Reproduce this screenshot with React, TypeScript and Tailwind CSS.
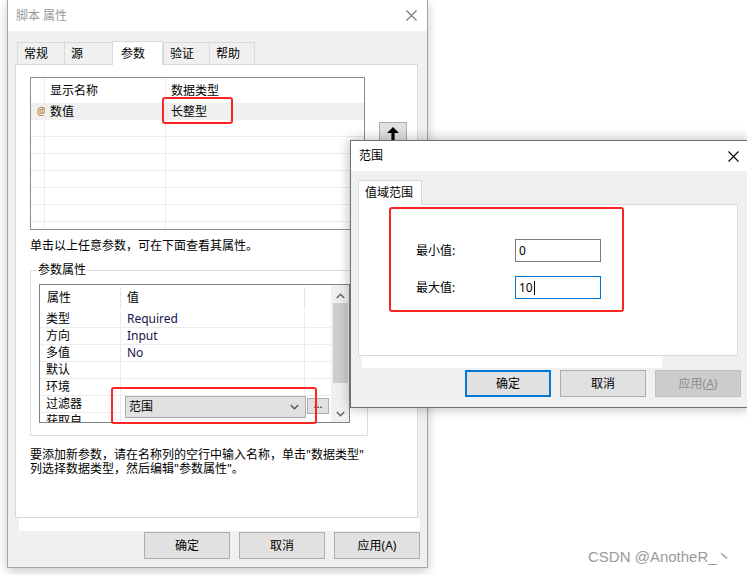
import React from 'react';

function CloseX({ className }: { className?: string }) {
  return (
    <svg width="11" height="11" viewBox="0 0 11 11" className={className}>
      <path d="M0.5 0.5L10.5 10.5M10.5 0.5L0.5 10.5" stroke="currentColor" strokeWidth="1.1" fill="none" />
    </svg>
  );
}

function Chevron({ up, className }: { up?: boolean; className?: string }) {
  return (
    <svg width="9" height="6" viewBox="0 0 9 6" className={className}>
      <path d={up ? 'M0.8 5L4.5 1.2L8.2 5' : 'M0.8 1L4.5 4.8L8.2 1'} stroke="currentColor" strokeWidth="1.4" fill="none" />
    </svg>
  );
}

function WinButton({ children, className = '' }: { children: React.ReactNode; className?: string }) {
  return (
    <div className={`h-[27px] w-[86px] flex items-center justify-center border text-[12px] ${className}`}>
      {children}
    </div>
  );
}

const propRows = [
  { name: '类型', value: 'Required' },
  { name: '方向', value: 'Input' },
  { name: '多值', value: 'No' },
  { name: '默认', value: '' },
  { name: '环境', value: '' },
  { name: '过滤器', value: '' },
  { name: '获取自', value: '' },
];

function ParamTable() {
  return (
    <div className="w-[335px] h-[153px] border border-[#8c8c8c] bg-white overflow-hidden">
      <div className="flex h-[25px]">
        <div className="w-[14px] border-r border-[#ececec]" />
        <div className="w-[121px] border-r border-[#ececec] pl-[5px] flex items-center">显示名称</div>
        <div className="flex-1 pl-[5px] flex items-center">数据类型</div>
      </div>
      <div className="flex h-[17px] bg-[#efefef] leading-[17px]">
        <div className="w-[14px] overflow-hidden relative">
          <span className="absolute left-[6px] top-0 text-[10px] text-[#b06010]">@</span>
        </div>
        <div className="w-[121px] pl-[5px]">数值</div>
        <div className="flex-1 pl-[5px]">长整型</div>
      </div>
      {[0, 1, 2, 3, 4, 5, 6].map((i) => (
        <div key={i} className="flex h-[17px] border-b border-[#ececec]">
          <div className="w-[14px] border-r border-[#ececec]" />
          <div className="w-[121px] border-r border-[#ececec]" />
          <div className="flex-1" />
        </div>
      ))}
    </div>
  );
}

function PropGrid() {
  return (
    <div className="w-[311px] h-[139px] border border-[#828282] flex bg-white">
      <div className="flex-1 overflow-hidden">
        <div className="flex h-[26px] items-center">
          <div className="w-[81px] h-[22px] pl-[7px] flex items-center border-r border-[#e5e5e5]">属性</div>
          <div className="w-[184px] h-[22px] pl-[6px] flex items-center border-r border-[#e5e5e5]">值</div>
          <div className="w-[26px]" />
        </div>
        {propRows.map((r) => (
          <div key={r.name} className="relative flex h-[17px] leading-[16px] border-b border-[#ececec]">
            <div className="w-[81px] pl-[6px] border-r border-[#ececec]">{r.name}</div>
            <div className="w-[184px] pl-[6px] border-r border-[#ececec] text-[#14144a]">{r.value}</div>
            <div className="w-[26px]" />
            {r.name === '过滤器' && (
              <>
                <div className="absolute left-[85px] top-0 z-10 w-[181px] h-[22px] bg-[#e1e1e1] border border-[#adadad] flex items-center justify-between pl-[3px] pr-[6px]">
                  <span>范围</span>
                  <Chevron className="text-[#555]" />
                </div>
                <div className="absolute left-[267px] top-[2px] z-10 w-[22px] h-[16px] bg-[#e1e1e1] border border-[#adadad] flex items-center justify-center text-[11px] leading-[10px] pb-[4px]">
                  ...
                </div>
              </>
            )}
          </div>
        ))}
      </div>
      <div className="w-[18px] bg-[#f0f0f0] flex flex-col items-center text-[#606060]">
        <Chevron up className="mt-[8px]" />
        <div className="mt-[4px] w-[15px] h-[80px] bg-[#cdcdcd]" />
        <div className="flex-1" />
        <Chevron className="mb-[5px]" />
      </div>
    </div>
  );
}

function MainDialog() {
  const tabs = ['常规', '源', '参数', '验证', '帮助'];
  const widths = ['w-[47px]', 'w-[48px]', 'w-[51px]', 'w-[46px]', 'w-[46px]'];
  return (
    <div className="absolute left-[7px] top-0 w-[421px] h-[568px] border-x border-b border-[#a6a6a6] bg-[#f0f0f0] shadow-[0_3px_10px_rgba(0,0,0,0.22)] flex flex-col">
      <div className="h-[31px] bg-white flex items-center justify-between pl-[8px] pr-[10px]">
        <span className="text-[12px] text-[#9a9a9a]">脚本 属性</span>
        <CloseX className="text-[#777]" />
      </div>
      <div className="pl-[7px] pt-[9px]">
        <div className="ml-[2px] h-[24px] flex items-end">
          {tabs.map((t, i) =>
            t === '参数' ? (
              <div key={t} className={`${widths[i]} h-[24px] bg-white border-x border-t border-[#d9d9d9] -mb-[1px] relative z-10 pl-[8px] pt-[3px]`}>
                {t}
              </div>
            ) : (
              <div key={t} className={`${widths[i]} h-[22px] border-t border-l border-[#d9d9d9] last:border-r pl-[6px] flex items-center`}>
                {t}
              </div>
            )
          )}
        </div>
        <div className="w-[403px] h-[454px] bg-white border border-[#d9d9d9] pl-[14px] pt-[12px]">
          <div className="flex items-start">
            <ParamTable />
            <div className="ml-[14px] mt-[45px] w-[28px] h-[26px] bg-[#e1e1e1] border border-[#adadad] flex justify-center pt-[4px]">
              <svg width="12" height="20" viewBox="0 0 12 20">
                <polygon points="6,0 12,6 7.6,6 7.6,20 4.4,20 4.4,6 0,6" fill="#000" />
              </svg>
            </div>
          </div>
          <div className="mt-[8px] leading-[16px]">单击以上任意参数，可在下面查看其属性。</div>
          <div className="relative mt-[16px] w-[338px] h-[166px] border border-[#dcdcdc] pl-[8px] pt-[13px]">
            <span className="absolute left-[6px] -top-[9px] bg-white px-[1px] leading-[16px]">参数属性</span>
            <PropGrid />
          </div>
          <div className="mt-[12px] leading-[14px]">
            <div>要添加新参数，请在名称列的空行中输入名称，单击"数据类型"</div>
            <div>列选择数据类型，然后编辑"参数属性"。</div>
          </div>
        </div>
        <div className="ml-[4px] w-[401px] h-[13px] bg-white" />
        <div className="mt-[1px] flex justify-end gap-[9px] pr-[7px]">
          <WinButton className="bg-[#e1e1e1] border-[#adadad]">确定</WinButton>
          <WinButton className="bg-[#e1e1e1] border-[#adadad]">取消</WinButton>
          <WinButton className="bg-[#e1e1e1] border-[#adadad]">应用(A)</WinButton>
        </div>
      </div>
    </div>
  );
}

function RangeDialog() {
  return (
    <div className="absolute left-[350px] top-[140px] w-[400px] h-[268px] border border-[#707070] bg-[#f0f0f0] shadow-[0_0_12px_rgba(0,0,0,0.3)] flex flex-col">
      <div className="h-[30px] bg-white flex items-center justify-between pl-[8px] pr-[10px]">
        <span className="text-[12px] text-black">范围</span>
        <CloseX className="text-black" />
      </div>
      <div className="pl-[7px] pt-[9px]">
        <div className="w-[64px] h-[25px] bg-white border-x border-t border-[#d9d9d9] -mb-[1px] relative z-10 pl-[6px] pt-[3px]">
          值域范围
        </div>
        <div className="w-[380px] h-[152px] bg-white border border-[#d9d9d9] pl-[57px] pt-[34px]">
          <div className="flex items-center">
            <div className="w-[99px]">最小值:</div>
            <div className="w-[86px] h-[23px] border border-[#7a7a7a] bg-white pl-[3px] flex items-center">0</div>
          </div>
          <div className="flex items-center mt-[14px]">
            <div className="w-[99px]">最大值:</div>
            <div className="w-[86px] h-[23px] border border-[#0078d7] bg-white pl-[3px] flex items-center">
              10
              <span className="ml-[1px] w-[1px] h-[14px] bg-black" />
            </div>
          </div>
        </div>
        <div className="ml-[4px] w-[300px] h-[12px] bg-white" />
        <div className="mt-[2px] ml-[107px] flex gap-[9px]">
          <WinButton className="bg-[#e1e1e1] border-2 border-[#0078d7]">确定</WinButton>
          <WinButton className="bg-[#e1e1e1] border-[#adadad]">取消</WinButton>
          <WinButton className="bg-[#cccccc] border-[#bfbfbf] text-[#8d8d8d]">
            应用(<span className="underline">A</span>)
          </WinButton>
        </div>
      </div>
    </div>
  );
}

export default function App() {
  return (
    <div className="relative w-[747px] h-[575px] bg-white overflow-hidden text-[12px] text-black font-['Noto_Sans','Noto_Sans_CJK_SC',sans-serif]">
      <MainDialog />
      <RangeDialog />
      {/* annotation boxes */}
      <div className="absolute left-[162px] top-[97px] w-[71px] h-[27px] border-2 border-[#ff2424] rounded-[3px] z-20" />
      <div className="absolute left-[111px] top-[387px] w-[206px] h-[37px] border-2 border-[#ff2424] rounded-[3px] z-20" />
      <div className="absolute left-[389px] top-[207px] w-[235px] h-[105px] border-2 border-[#ff2424] rounded-[3px] z-20" />
      <div className="absolute left-[588px] top-[547px] text-[15px] leading-[20px] text-[#9a9a9a] font-['Liberation_Sans','Noto_Sans_CJK_SC',sans-serif]">
        CSDN @AnotheR_丶
      </div>
    </div>
  );
}
